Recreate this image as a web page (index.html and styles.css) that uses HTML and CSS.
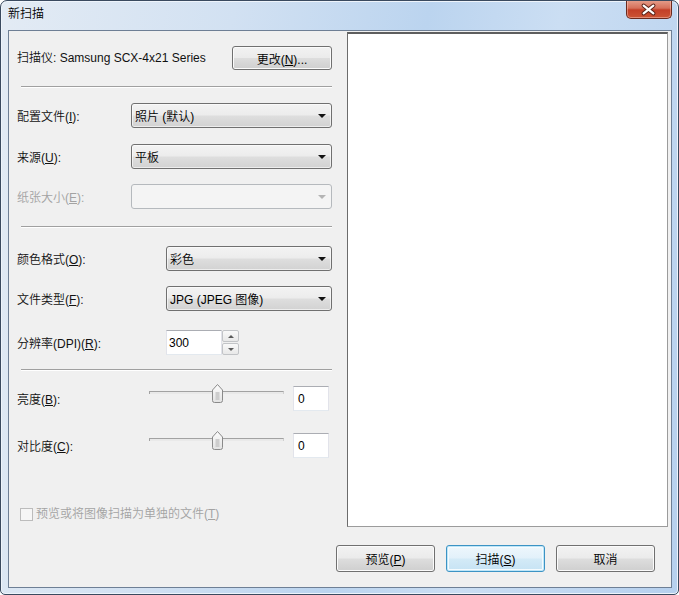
FILE: index.html
```html
<!DOCTYPE html>
<html lang="zh-CN">
<head>
    <meta charset="UTF-8">
    <title>新扫描</title>
    <link rel="stylesheet" href="styles.css">
</head>
<body>
    <div class="window">
        <div class="titlebar">
            <span class="title">新扫描</span>
            <div class="close">
                <svg width="46" height="19" viewBox="0 0 46 19">
                    <path d="M18 5.5 L28 13.5 M28 5.5 L18 13.5" stroke="#5b2319" stroke-width="4.2" stroke-linecap="round"/>
                    <path d="M18 5.5 L28 13.5 M28 5.5 L18 13.5" stroke="#fff" stroke-width="2.2" stroke-linecap="round"/>
                </svg>
            </div>
        </div>

        <div class="client">
            <div class="settings">
                <!-- scanner -->
                <div class="row scanner">
                    <span class="label">扫描仪: Samsung SCX-4x21 Series</span>
                    <button class="btn change">更改(<u>N</u>)...</button>
                </div>
                <div class="sep"></div>

                <!-- profile / source / paper -->
                <div class="row field">
                    <span class="label">配置文件(<u>I</u>):</span>
                    <div class="combo">照片 (默认)<i class="arrow"></i></div>
                </div>
                <div class="row field gap16">
                    <span class="label">来源(<u>U</u>):</span>
                    <div class="combo">平板<i class="arrow"></i></div>
                </div>
                <div class="row field disabled">
                    <span class="label">纸张大小(<u>E</u>):</span>
                    <div class="combo"><i class="arrow"></i></div>
                </div>
                <div class="sep sep2"></div>

                <!-- format -->
                <div class="row field wide after-sep">
                    <span class="label">颜色格式(<u>O</u>):</span>
                    <div class="combo">彩色<i class="arrow"></i></div>
                </div>
                <div class="row field wide">
                    <span class="label">文件类型(<u>F</u>):</span>
                    <div class="combo">JPG (JPEG 图像)<i class="arrow"></i></div>
                </div>
                <div class="row field wide dpi">
                    <span class="label">分辨率(DPI)(<u>R</u>):</span>
                    <div class="spin">
                        <div class="textbox">300</div>
                        <div class="spin-btns">
                            <div class="spin-btn"><i class="up"></i></div>
                            <div class="spin-btn"><i class="down"></i></div>
                        </div>
                    </div>
                </div>
                <div class="sep sep3"></div>

                <!-- sliders -->
                <div class="row slide-row">
                    <span class="label">亮度(<u>B</u>):</span>
                    <div class="slider">
                        <div class="track"></div>
                        <svg class="thumb" width="11" height="19" viewBox="0 0 11 19">
                            <defs>
                                <linearGradient id="tg" x1="0" y1="0" x2="0" y2="1">
                                    <stop offset="0" stop-color="#fdfdfd"/>
                                    <stop offset="1" stop-color="#e2e2e2"/>
                                </linearGradient>
                            </defs>
                            <path d="M0.5 6 L5.5 0.5 L10.5 6 V16.5 Q10.5 18.5 8.5 18.5 H2.5 Q0.5 18.5 0.5 16.5 Z" fill="url(#tg)" stroke="#8a8a8a"/>
                            <rect x="3.5" y="8" width="4" height="8" fill="#cdcdcd"/>
                        </svg>
                    </div>
                    <div class="textbox small">0</div>
                </div>
                <div class="row slide-row second">
                    <span class="label">对比度(<u>C</u>):</span>
                    <div class="slider">
                        <div class="track"></div>
                        <svg class="thumb" width="11" height="19" viewBox="0 0 11 19">
                            <path d="M0.5 6 L5.5 0.5 L10.5 6 V16.5 Q10.5 18.5 8.5 18.5 H2.5 Q0.5 18.5 0.5 16.5 Z" fill="url(#tg)" stroke="#8a8a8a"/>
                            <rect x="3.5" y="8" width="4" height="8" fill="#cdcdcd"/>
                        </svg>
                    </div>
                    <div class="textbox small">0</div>
                </div>

                <label class="check">
                    <span class="box"></span>
                    <span>预览或将图像扫描为单独的文件(<u>T</u>)</span>
                </label>
            </div>

            <div class="preview"></div>

            <div class="actions">
                <button class="btn">预览(<u>P</u>)</button>
                <button class="btn default">扫描(<u>S</u>)</button>
                <button class="btn">取消</button>
            </div>
        </div>
    </div>
</body>
</html>
```

FILE: styles.css
```css
*
{
    box-sizing: border-box;
}
body
{
    margin: 0;
    font: 350 12px "Liberation Sans", "Noto Sans CJK SC", sans-serif;
    color: #111;
}
u
{
    text-underline-offset: 1px;
}

/* window frame */
.window
{
    width: 679px;
    height: 595px;
    border: 1px solid #3a4a5f;
    border-radius: 7px 7px 5px 5px;
    background: linear-gradient(100deg, #e3ebf4 0%, #d2e1f2 30%, #bbd4ef 55%, #cbdef3 72%, #b6d0ee 100%);
    box-shadow: inset 0 0 0 1px #eef4fb;
    display: flex;
    flex-direction: column;
    overflow: hidden;
}
.titlebar
{
    height: 29px;
    flex: none;
    display: flex;
    justify-content: space-between;
    align-items: flex-start;
    padding: 0 6px 0 7px;
}
.title
{
    line-height: 26px;
    color: #000;
}
.close
{
    width: 46px;
    height: 19px;
    margin-top: -1px;
    border: 1px solid #6b2a1e;
    border-top: none;
    border-radius: 0 0 5px 5px;
    background: linear-gradient(#e6a08d 0%, #d6705a 45%, #c33f27 55%, #cc5434 100%);
    box-shadow: inset 0 0 0 1px rgba(255, 210, 200, .45);
    display: flex;
}
.close svg
{
    margin-left: -1px;
}

/* client area */
.client
{
    flex: 1;
    margin: 0 6px 6px 7px;
    border: 1px solid #6e7f95;
    background: #f0f0f0;
    display: grid;
    grid-template-columns: 338px 1fr;
    grid-template-rows: 1fr auto;
}
.settings
{
    padding: 0 15px 0 8px;
    display: flex;
    flex-direction: column;
}
.row
{
    display: flex;
    align-items: center;
    flex: none;
}
.scanner
{
    height: 24px;
    margin-top: 15px;
    justify-content: space-between;
}
.scanner .label
{
    margin-bottom: 4px;
}
.sep
{
    flex: none;
    margin: 16px 0 0 4px;
    border-top: 1px solid #a0a0a0;
    border-bottom: 1px solid #fff;
}
.sep2{ margin-top: 17px; }
.sep3{ margin-top: 14px; }

.field
{
    height: 25px;
    margin-top: 15px;
}
.field.gap16{ margin-top: 16px; }
.field.after-sep{ margin-top: 18px; }
.dpi{ margin-top: 19px; }
.field .label
{
    width: 114px;
    flex: none;
}
.field.wide .label{ width: 149px; }
.disabled .label{ color: #a3a3a3; }

/* combo boxes */
.combo
{
    flex: 1;
    height: 25px;
    border: 1px solid #707070;
    border-radius: 3px;
    background: linear-gradient(#f3f3f3 0%, #ececec 48%, #dedede 52%, #d2d2d2 100%);
    box-shadow: inset 0 0 0 1px rgba(255, 255, 255, .6);
    padding: 0 5px 0 3px;
    display: flex;
    align-items: center;
    justify-content: space-between;
    color: #000;
}
.arrow
{
    width: 0;
    height: 0;
    margin-left: auto;
    border-left: 4px solid transparent;
    border-right: 4px solid transparent;
    border-top: 4px solid #111;
}
.disabled .combo
{
    border-color: #b5b9bd;
    background: #f4f4f4;
    box-shadow: none;
}
.disabled .arrow{ border-top-color: #b4b4b4; }

/* text boxes */
.textbox
{
    height: 25px;
    background: #fff;
    border: 1px solid #e2e3ea;
    border-top-color: #abadb3;
    border-bottom-color: #e3e9ef;
    padding: 0 3px;
    display: flex;
    align-items: center;
    color: #000;
}
.spin
{
    display: flex;
}
.spin .textbox
{
    width: 56px;
    padding-left: 2px;
}
.spin-btns
{
    width: 17px;
    display: flex;
    flex-direction: column;
    gap: 1px;
}
.spin-btn
{
    flex: 1;
    border: 1px solid #c2c4c7;
    border-radius: 2px;
    background: linear-gradient(#f9f9f9, #e8e8e8);
    display: flex;
    align-items: center;
    justify-content: center;
}
.up, .down
{
    width: 0;
    height: 0;
    border-left: 3px solid transparent;
    border-right: 3px solid transparent;
}
.up{ border-bottom: 3px solid #5a5a5a; }
.down{ border-top: 3px solid #5a5a5a; }

/* sliders */
.slide-row
{
    height: 25px;
    margin-top: 15px;
}
.slide-row.second{ margin-top: 22px; }
.slide-row .label
{
    width: 132px;
    flex: none;
}
.slider
{
    width: 135px;
    height: 19px;
    align-self: flex-start;
    margin-top: -2px;
    position: relative;
}
.track
{
    position: absolute;
    left: 0;
    right: 0;
    top: 7px;
    height: 3px;
    border-top: 1px solid #a2a2a2;
    border-left: 1px solid #a2a2a2;
    border-right: 1px solid #cfcfcf;
    background: #e9e9e9;
}
.thumb
{
    position: absolute;
    left: 63px;
    top: 0;
}
.textbox.small
{
    width: 36px;
    margin-left: 9px;
    padding-left: 4px;
}

/* checkbox */
.check
{
    display: flex;
    align-items: center;
    gap: 3px;
    height: 13px;
    line-height: 13px;
    margin: 50px 0 0 3px;
    color: #a3a3a3;
}
.box
{
    width: 13px;
    height: 13px;
    border: 1px solid #bcbcbc;
    background: #f6f6f6;
}

/* preview pane */
.preview
{
    margin: 1px 3px 0 0;
    background: #fff;
    border: 1px solid #9b9b9b;
    border-top: 2px solid #5e5e5e;
    border-left-color: #6c6c6c;
}

/* buttons */
.actions
{
    grid-column: 1 / -1;
    display: flex;
    justify-content: flex-end;
    gap: 11px;
    padding: 18px 16px 15px 0;
}
.btn
{
    font: inherit;
    color: #000;
    height: 27px;
    width: 99px;
    border: 1px solid #707070;
    border-radius: 3px;
    background: linear-gradient(#f2f2f2 0%, #ebebeb 48%, #dddddd 52%, #cfcfcf 100%);
    box-shadow: inset 0 0 0 1px #fbfbfb;
    padding: 0;
}
.btn.change
{
    width: 100px;
    height: 24px;
}
.btn.default
{
    border-color: #3c93c4;
    background: linear-gradient(#eef7fc 0%, #e2f1fa 48%, #d3eaf7 52%, #c6e3f4 100%);
    box-shadow: inset 0 0 0 1px #bfe6f8, inset 0 0 0 2px #f5fbfe;
}
```
